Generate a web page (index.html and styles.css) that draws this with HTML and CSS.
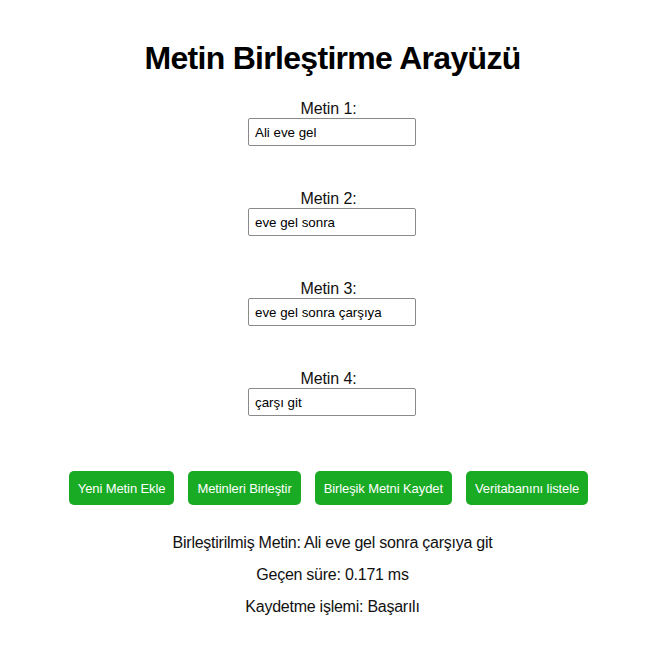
FILE: index.html
```html
<!DOCTYPE html>
<html lang="tr">
<head>
<meta charset="utf-8">
<title>Metin Birleştirme Arayüzü</title>
<link rel="stylesheet" href="styles.css">
</head>
<body>
<div class="app">
  <h1 class="title">Metin Birleştirme Arayüzü</h1>
  <div class="fields">
    <div class="field">
      <label class="label" for="t1">Metin 1:</label>
      <input class="input" id="t1" type="text" value="Ali eve gel">
    </div>
    <div class="field">
      <label class="label" for="t2">Metin 2:</label>
      <input class="input" id="t2" type="text" value="eve gel sonra">
    </div>
    <div class="field">
      <label class="label" for="t3">Metin 3:</label>
      <input class="input" id="t3" type="text" value="eve gel sonra çarşıya">
    </div>
    <div class="field">
      <label class="label" for="t4">Metin 4:</label>
      <input class="input" id="t4" type="text" value="çarşı git">
    </div>
  </div>
  <div class="actions">
    <button class="btn">Yeni Metin Ekle</button>
    <button class="btn">Metinleri Birleştir</button>
    <button class="btn">Birleşik Metni Kaydet</button>
    <button class="btn">Veritabanını listele</button>
  </div>
  <div class="results">
    <p class="result">Birleştirilmiş Metin: Ali eve gel sonra çarşıya git</p>
    <p class="result">Geçen süre: 0.171 ms</p>
    <p class="result">Kaydetme işlemi: Başarılı</p>
  </div>
</div>
</body>
</html>
```
FILE: styles.css
```css
html, body {
  margin: 0;
  padding: 0;
  background: #ffffff;
}
body {
  font-family: "Liberation Sans", Arial, sans-serif;
  color: #111;
}
.app {
  display: flex;
  flex-direction: column;
  align-items: center;
  padding-top: 40px;
}
.title {
  margin: 0 0 0 -2px;
  font-size: 32px;
  font-weight: bold;
  line-height: 37px;
  letter-spacing: -0.7px;
  color: #000;
}
.fields {
  display: flex;
  flex-direction: column;
  align-items: center;
  gap: 44px;
  margin-top: 23px;
  margin-right: 3px;
}
.field {
  display: flex;
  flex-direction: column;
  align-items: center;
}
.label {
  font-size: 16px;
  line-height: 18px;
  letter-spacing: -0.1px;
  margin-right: 7px;
}
.input {
  box-sizing: border-box;
  width: 168px;
  height: 28px;
  padding: 0 6px;
  border: 1px solid #8a8a8a;
  border-radius: 2px;
  font-family: "Liberation Sans", Arial, sans-serif;
  font-size: 13.33px;
  color: #000;
}
.actions {
  display: flex;
  gap: 14px;
  margin-top: 55px;
  margin-right: 10px;
}
.btn {
  background: #1aab25;
  color: #fff;
  border: none;
  border-radius: 5px;
  height: 34px;
  padding: 0 9px;
  font-family: "Liberation Sans", Arial, sans-serif;
  font-size: 13px;
  letter-spacing: -0.1px;
}
.results {
  display: flex;
  flex-direction: column;
  align-items: center;
  gap: 14px;
  margin-top: 29px;
  margin-right: 2px;
}
.result {
  margin: 0;
  font-size: 16px;
  line-height: 18px;
  letter-spacing: -0.25px;
}
```
